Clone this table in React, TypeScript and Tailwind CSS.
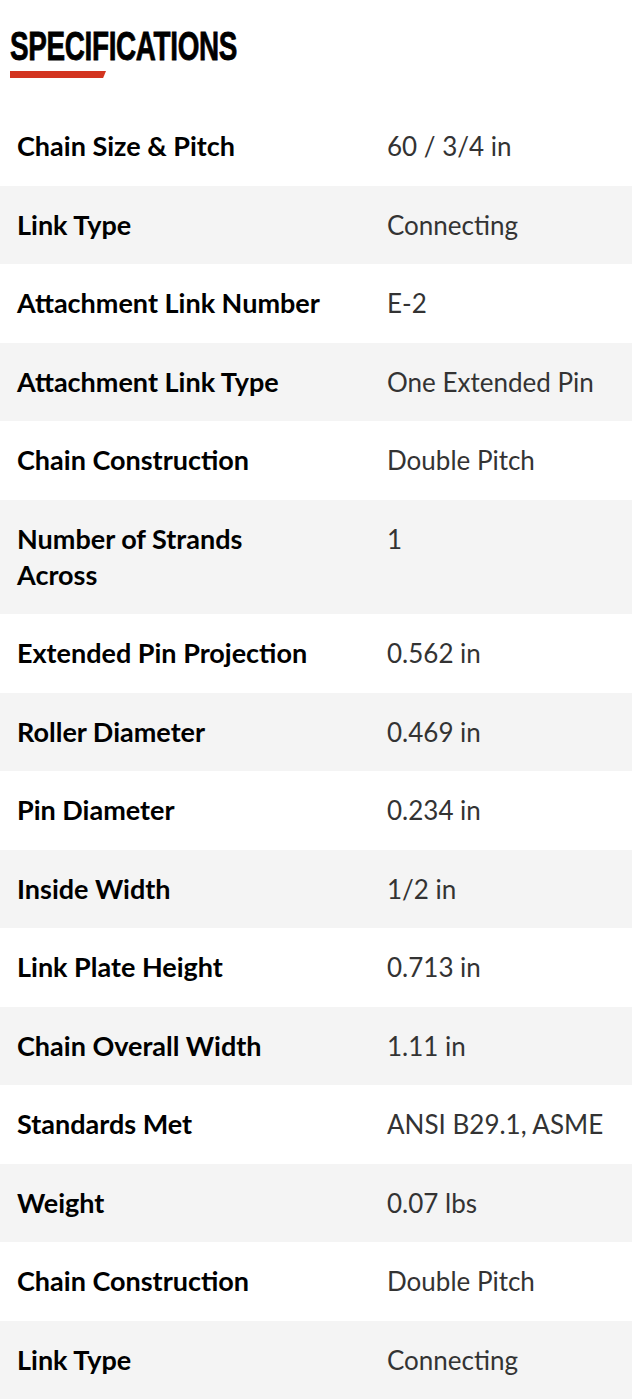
import React from 'react'

const specs = [
  { label: 'Chain Size & Pitch', value: '60 / 3/4 in' },
  { label: 'Link Type', value: 'Connecting' },
  { label: 'Attachment Link Number', value: 'E-2' },
  { label: 'Attachment Link Type', value: 'One Extended Pin' },
  { label: 'Chain Construction', value: 'Double Pitch' },
  { label: 'Number of Strands\nAcross', value: '1' },
  { label: 'Extended Pin Projection', value: '0.562 in' },
  { label: 'Roller Diameter', value: '0.469 in' },
  { label: 'Pin Diameter', value: '0.234 in' },
  { label: 'Inside Width', value: '1/2 in' },
  { label: 'Link Plate Height', value: '0.713 in' },
  { label: 'Chain Overall Width', value: '1.11 in' },
  { label: 'Standards Met', value: 'ANSI B29.1, ASME' },
  { label: 'Weight', value: '0.07 lbs' },
  { label: 'Chain Construction', value: 'Double Pitch' },
  { label: 'Link Type', value: 'Connecting' },
]

const App = () => {
  return (
    <div className="w-[632px] bg-white font-['Lato',sans-serif]">
      <div className="h-[107px] pl-[10px] pt-[26px]">
        <h2 className="font-['Liberation_Sans',sans-serif] font-bold text-[41px] leading-[40px] text-black tracking-[-0.5px] origin-left scale-x-[0.68] uppercase whitespace-nowrap [-webkit-text-stroke:0.8px_black]">
          Specifications
        </h2>
        <div className="mt-[5px] w-[96px] h-[7px] bg-[#d3341f] [clip-path:polygon(0_0,100%_0,97%_100%,0_100%)]" />
      </div>

      <div>
        {specs.map((row, index) => (
          <div
            key={index}
            className={`flex py-[21.25px] leading-[36px] ${
              index % 2 === 0 ? 'bg-white' : 'bg-[#f4f4f4]'
            }`}
          >
            <div className="w-[370px] shrink-0 pl-[17px] text-[27px] font-bold text-black whitespace-pre-line">
              {row.label}
            </div>
            <div className="pl-[17px] text-[26px] text-[#333333]">{row.value}</div>
          </div>
        ))}
      </div>
    </div>
  )
}

export default App
